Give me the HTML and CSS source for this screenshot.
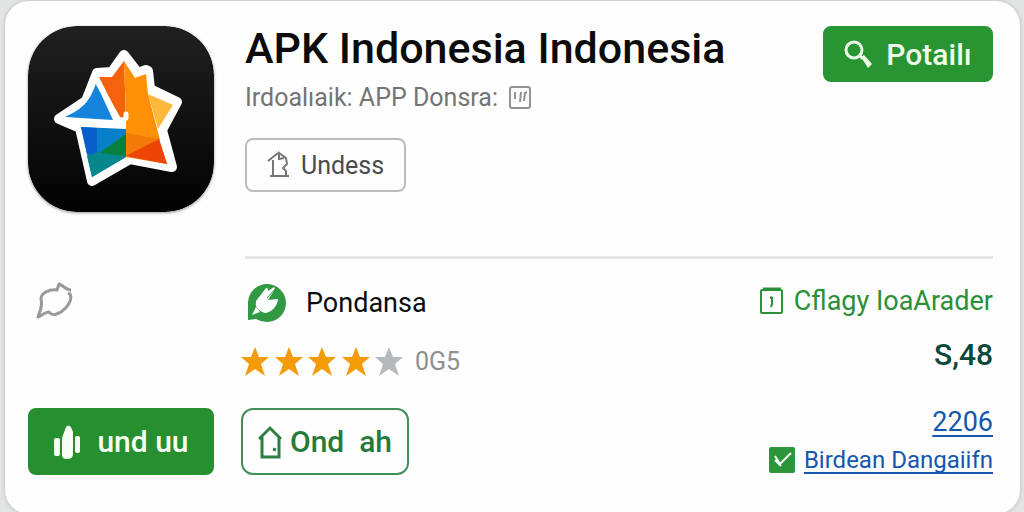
FILE: index.html
```html
<!DOCTYPE html>
<html lang="id">
<head>
    <meta charset="UTF-8">
    <meta name="viewport" content="width=device-width, initial-scale=1.0">
    <title>APK Indonesia Indonesia</title>
    <link rel="stylesheet" href="styles.css">
</head>
<body>

<main class="card">
    <svg class="logo" viewBox="0 0 186 186" aria-hidden="true">
        <defs>
            <linearGradient id="tile" x1="0" y1="0" x2="0" y2="1">
                <stop offset="0" stop-color="#202020"/>
                <stop offset="1" stop-color="#020202"/>
            </linearGradient>
        </defs>
        <rect width="186" height="186" rx="49" fill="url(#tile)"/>
        <path d="M96 29l14 18 8-3 2 1 2 18 27 13-15 28 10 37-42-8-38 22-12-53-21-9 27-18 11-28 15-1z" fill="#fff" stroke="#fff" stroke-width="10" stroke-linejoin="round"/>
        <path d="M71 51h13l12-16 2 57-7-1z" fill="#f4630b"/>
        <path d="M96 35l11 17 11-4 2 20 12 46-34-6V90z" fill="#fd9006"/>
        <path d="M120 68l25 11-15 24z" fill="#fdb83c"/>
        <path d="M98 107l33 6 8 25-41-7z" fill="#f27b08"/>
        <path d="M98 130l33-17 8 25z" fill="#ed4505"/>
        <path d="M68 57l17 37-48-3c17-8 25-15 31-34z" fill="#1684dd"/>
        <path d="M53 101l45 2v28l-34 20z" fill="#087fc8"/>
        <path d="M53 101l16 1v26l-10 0z" fill="#075fca"/>
        <path d="M98 108v23l-34 20-5-21 14-5z" fill="#06878d"/>
        <path d="M98 108v22l-26-3z" fill="#08803d"/>
        <path d="M66 50l26 46M52 97h40l6-5v-4" fill="none" stroke="#fff" stroke-width="5" stroke-linecap="round" stroke-linejoin="round"/>
    </svg>

    <header class="info">
        <div>
            <h1>APK Indonesia Indonesia</h1>
            <p class="subtitle">Irdoalıaik: APP Donsra:
                <svg width="24" height="24" viewBox="0 0 24 24" aria-hidden="true">
                    <rect x="2" y="1" width="20" height="21" rx="2"/>
                    <path d="M7 6v7M12 16l1-10M16 15l1-8 2-1"/>
                </svg>
            </p>
            <button class="btn plain">
                <svg width="24" height="28" viewBox="0 0 24 28" aria-hidden="true">
                    <path d="M1 10l10-8M6 9v15M3 25h19M19 25v-5l-3-3 4-4-1-6-7-5v6l5-1"/>
                </svg>
                Undess
            </button>
        </div>
        <button class="btn search">
            <svg width="28" height="30" viewBox="0 0 28 30" aria-hidden="true">
                <circle cx="10" cy="11" r="8"/>
                <path d="M15 16l4 4"/>
                <path d="M17 18l3-2 8 9-4 4z" fill="#effbe9" stroke="none"/>
            </svg>
            Potailı
        </button>
    </header>

    <svg class="comment" width="38" height="38" viewBox="0 0 38 38" aria-hidden="true">
        <path d="M35 9c-5 0-7-4-12-6l-2 6C13 8 5 12 5 18c2 8-1 11-3 18 5-2 7-5 11-5 4 5 8 2 12 0 6-4 12-12 9-18l-2-1"/>
    </svg>

    <section class="details">
        <div class="publisher">
            <svg width="40" height="41" viewBox="0 0 40 41" aria-hidden="true">
                <path d="M1 38V20A19 19 0 1 1 20 40Q14 40 9 37z" fill="#309941"/>
                <path d="M9 19L19 6q2-1 2 3l6-4 1 2-7 11 10-1c0 6-6 13-12 14q-4 0-9-5-2-3-1-7z" fill="#fff"/>
                <path d="M5 33l4-8 4 5z" fill="#fff"/>
                <path d="M20 16l8-9" stroke="#309941" fill="none"/>
            </svg>
            Pondansa
        </div>
        <div class="rating">
            <svg width="162" height="30" viewBox="0 0 162 30" role="img" aria-label="4 / 5">
                <defs>
                    <path id="star" d="M14 0l4 10h10l-8 7 4 12-10-7-10 7 4-12-8-7h10z"/>
                </defs>
                <g fill="#f39c08">
                    <use href="#star"/>
                    <use href="#star" x="34"/>
                    <use href="#star" x="67"/>
                    <use href="#star" x="101"/>
                </g>
                <use href="#star" x="134" fill="#b7babd"/>
            </svg>
            0G5
        </div>
    </section>

    <section class="stats">
        <div class="category">
            <svg width="24" height="30" viewBox="0 0 24 30" aria-hidden="true">
                <rect x="1" y="4" width="21" height="23" rx="1"/>
                <path d="M3 3h18" stroke-width="3"/>
                <path d="M12 11v7l-1 3M10 12l2-1"/>
            </svg>
            Cflagy IoaArader
        </div>
        <strong>S,48</strong>
    </section>

    <button class="btn primary">
        <svg width="28" height="36" viewBox="0 0 28 36" aria-hidden="true">
            <rect x="1" y="14" width="6" height="18" rx="2"/>
            <path d="M9 14l4-11q2-3 5 0l2 5v22q0 5-6 5-5 0-5-4z"/>
            <rect x="22" y="12" width="5" height="17" rx="2"/>
        </svg>
        und uu
    </button>

    <div class="actions">
        <button class="btn outline">
            <svg width="24" height="34" viewBox="0 0 24 34" aria-hidden="true">
                <path d="M1 14L12 3l11 11M4 12v20h17V12M15 24l3 1"/>
            </svg>
            Ond &nbsp;ah
        </button>
    </div>

    <nav class="links">
        <a href="#">2206</a>
        <div class="verified">
            <svg width="26" height="26" viewBox="0 0 26 26" aria-hidden="true">
                <rect width="26" height="26" rx="2" fill="#2c963a"/>
                <path d="M6 9l5 8L22 6M6 13l6 6" fill="none" stroke="#fff" stroke-width="2"/>
            </svg>
            <a href="#">Birdean Dangaiifn</a>
        </div>
    </nav>
</main>

</body>
</html>
```

FILE: styles.css
```css
* {
    box-sizing: border-box;
}

body {
    font-family: Roboto, "Liberation Sans", sans-serif;
    background-color: #e3e4e6;
    margin: 0;
    padding: 1px 4px 0 5px;
    color: #0b0b0b;
}

h1, p {
    margin: 0;
}

svg {
    flex-shrink: 0;
}

.card {
    display: grid;
    grid-template-columns: 186px 1fr auto;
    column-gap: 27px;
    min-height: calc(100vh - 1px);
    padding: 25px 27px 36px 23px;
    background-color: #fefefe;
    border-radius: 24px;
    box-shadow: 0 0 4px rgba(0, 0, 0, 0.2);
    align-content: start;
}

.logo {
    width: 100%;
    border-radius: 49px;
    box-shadow: 0 1px 3px rgba(0, 0, 0, 0.4);
    align-self: start;
}

.info {
    grid-column: 2 / 4;
    display: flex;
    justify-content: space-between;
    align-items: flex-start;
    margin-left: 4px;
    padding-bottom: 64px;
    border-bottom: 3px solid #e4e5e5;
}

h1 {
    font-size: 43px;
    font-weight: 500;
    line-height: 44px;
}

.subtitle {
    display: flex;
    align-items: center;
    gap: 10px;
    margin: 12px 0 24px;
    font-size: 25px;
    line-height: 32px;
    color: #747474;
}

.subtitle svg {
    fill: none;
    stroke: #929292;
    stroke-width: 2;
}

.btn {
    display: flex;
    align-items: center;
    justify-content: center;
    border: 2px solid #278f30;
    border-radius: 8px;
    font-family: inherit;
    font-weight: 500;
    cursor: pointer;
}

.plain {
    gap: 10px;
    height: 54px;
    padding: 0 20px;
    background-color: #fefefe;
    border-color: #bcbcbc;
    color: #4b4b4b;
    font-size: 25px;
    font-weight: 400;
}

.plain svg {
    fill: none;
    stroke: #777;
    stroke-width: 2;
}

.search {
    gap: 14px;
    width: 170px;
    height: 56px;
    padding: 0;
    background-color: #289532;
    border-color: #289532;
    color: #effbe9;
    font-size: 30px;
}

.search svg {
    fill: none;
    stroke: #effbe9;
    stroke-width: 3;
}

.comment {
    margin: 22px 0 0 8px;
    fill: none;
    stroke: #999;
    stroke-width: 3;
    stroke-linejoin: round;
}

.details {
    padding-top: 23px;
}

.publisher {
    display: flex;
    align-items: center;
    gap: 19px;
    padding-left: 6px;
    font-size: 27px;
    line-height: 40px;
}

.rating {
    display: flex;
    align-items: center;
    gap: 12px;
    margin-top: 23px;
    font-size: 25px;
    line-height: 32px;
    color: #8d8f91;
}

.stats, .links {
    display: flex;
    flex-direction: column;
    align-items: flex-end;
}

.stats {
    gap: 18px;
    padding-top: 24px;
    font-size: 27px;
    line-height: 36px;
}

.stats strong {
    font-size: 30px;
    font-weight: 500;
    color: #07483a;
}

.category {
    display: flex;
    align-items: center;
    gap: 10px;
    color: #2b9037;
}

.category svg {
    fill: none;
    stroke: #2b9037;
    stroke-width: 2;
}

.primary, .outline {
    height: 67px;
    margin-top: 30px;
    padding: 0;
    font-size: 30px;
}

.primary {
    gap: 16px;
    background-color: #278f30;
    color: #f7fff4;
}

.primary svg {
    fill: #f7fff4;
}

.outline {
    gap: 8px;
    width: 168px;
    background-color: #fefefe;
    border-color: #43915a;
    border-radius: 12px;
    color: #247c3b;
}

.outline svg {
    fill: none;
    stroke: #2b8040;
    stroke-width: 3;
}

.links {
    gap: 2px;
    margin-top: 26px;
    font-size: 27px;
    line-height: 36px;
}

.links a {
    color: #1557ad;
    text-underline-offset: 4px;
    text-decoration-thickness: 2px;
    text-decoration-skip-ink: none;
}

.verified {
    display: flex;
    align-items: center;
    gap: 9px;
    font-size: 24px;
}

@media (max-width: 800px) {
    .card {
        grid-template-columns: 120px 1fr;
    }

    .info {
        flex-wrap: wrap;
        gap: 16px;
    }

    .stats, .links {
        grid-column: 2;
        align-items: flex-start;
    }
}
```
